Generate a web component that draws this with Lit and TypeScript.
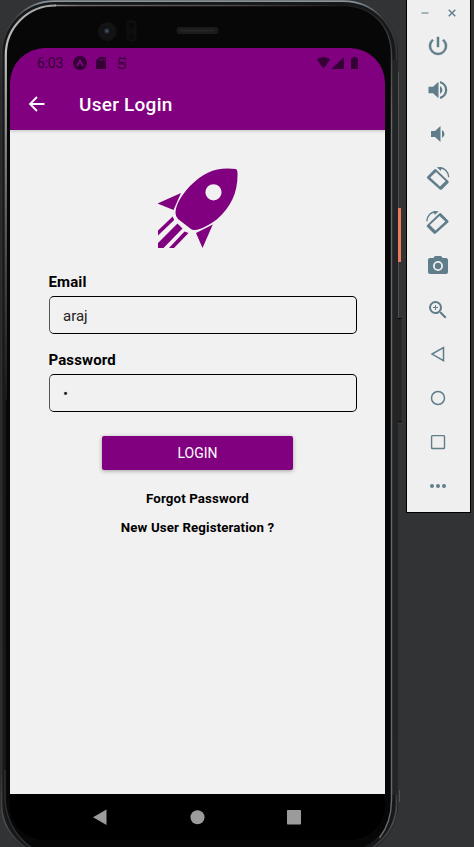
import { LitElement, html, svg, css } from "lit";
import { customElement } from "lit/decorators.js";

const rotate = svg`<path fill-rule="evenodd" d="M1.400 10.500 8.300 3.500q1-.9 2 0L22.300 15q.9 1 0 2l-6.500 6.400q-1 .8-2 0L1.400 12.500q-.9-1 0-2zM4.200 11.600 14 20.500 19.600 14.900 10 6z"/><path d="M13 2.100C18.500 1.600 22.300 5.500 22.700 11.300" fill="none" stroke="currentColor" stroke-width="1.400"/><path d="M10.800 1.300 16 .9l-1.300 4z"/>`;

const toolIcons = [
  svg`<path d="M13 3h-2v10h2V3zm4.830 2.170l-1.420 1.420A6.920 6.920 0 0 1 19 12a7 7 0 1 1-11.420-5.420L6.170 5.170A8.930 8.930 0 0 0 3 12a9 9 0 0 0 18 0c0-2.740-1.230-5.180-3.170-6.830z" stroke="currentColor" stroke-width=".5"/>`,
  svg`<path d="M2.500 8.700v6.600h4.500l5.500 5v-16.600l-5.500 5zM14 8v8a4.500 4.500 0 0 0 0-8zM14 3v2.300a7 7 0 0 1 0 13.400V21a9.200 9.200 0 0 0 0-18z"/>`,
  svg`<path d="M18.500 12A4.500 4.500 0 0 0 16 7.970v8.050A4.500 4.500 0 0 0 18.500 12zM5 9v6h4l5.500 5V4L9 9H5z"/>`,
  rotate,
  svg`<g transform="translate(23.500 0) scale(-1 1)">${rotate}</g>`,
  svg`<g><circle cx="12" cy="12" r="3.200"/><path d="M9 2 7.170 4H4c-1.100 0-2 .9-2 2v12c0 1.100.9 2 2 2h16c1.100 0 2-.9 2-2V6c0-1.100-.9-2-2-2h-3.170L15 2H9zm3 15a5 5 0 1 1 0-10 5 5 0 0 1 0 10z"/></g>`,
  svg`<path d="M15.500 14h-.79l-.28-.27A6.470 6.470 0 0 0 16 9.500 6.500 6.500 0 1 0 9.500 16c1.610 0 3.090-.59 4.230-1.570l.27.28v.79l5 4.990L20.490 19l-4.990-5zm-6 0a4.500 4.500 0 1 1 0-9 4.500 4.500 0 0 1 0 9zm2.500-4h-2v2H9v-2H7V9h2V7h1v2h2v1z"/>`,
  svg`<path d="M17.500 5.500v13.200L6 12.100z" fill="none" stroke="currentColor" stroke-width="1.500"/>`,
  svg`<circle cx="12" cy="12" r="6.500" fill="none" stroke="currentColor" stroke-width="1.500"/>`,
  svg`<rect x="5.600" y="5.600" width="12.900" height="12.900" rx=".8" fill="none" stroke="currentColor" stroke-width="1.400"/>`,
  svg`<path d="M6 10a2 2 0 1 0 0 4 2 2 0 0 0 0-4zm6 0a2 2 0 1 0 0 4 2 2 0 0 0 0-4zm6 0a2 2 0 1 0 0 4 2 2 0 0 0 0-4z"/>`,
];

@customElement("emulator-toolbar")
class EmulatorToolbar extends LitElement {
  static styles = css`
    :host { display: block; box-sizing: border-box; width: 65px; height: 513px; background: #efefef;
      border: 1px solid #000; border-top: 0; color: #607d8b; }
    .window { height: 24px; display: block; }
    .tools { display: flex; flex-direction: column; align-items: center; gap: 20px; padding: 10px 1px 0 0; }
    .tool { width: 24px; height: 24px; fill: currentColor; display: block; }
  `;
  render() {
    return html`
      <svg class="window" width="63" height="24" viewBox="0 0 63 24" fill="none" stroke="#607d8b">
        <path d="M14.500 13h7" stroke="#9aabb3" stroke-width="1.800" /><path d="M41.700 9.700l6.600 6.600m0-6.600-6.600 6.600" stroke-width="1.400" />
      </svg>
      <div class="tools">
        ${toolIcons.map((i) => html`<svg class="tool" viewBox="0 0 24 24">${i}</svg>`)}
      </div>`;
  }
}

@customElement("phone-shell")
class PhoneShell extends LitElement {
  static styles = css`:host { display: block; } svg { display: block; }`;
  render() {
    return html`<svg width="406" height="847" viewBox="0 0 406 847">
      <defs>
        <linearGradient id="rim" x1="0" x2="0" y1="0" y2="1">
          <stop offset="0" stop-color="#8b959c" /><stop offset=".006" stop-color="#6b7277" />
          <stop offset=".02" stop-color="#3a3c3e" /><stop offset=".1" stop-color="#2c2d2f" />
          <stop offset=".9" stop-color="#303234" /><stop offset=".96" stop-color="#4a4c4e" />
          <stop offset="1" stop-color="#303030" />
        </linearGradient>
        <linearGradient id="topLine" gradientUnits="userSpaceOnUse" x1="40" x2="392" y1="0" y2="0">
          <stop offset="0" stop-color="#a8a8a8" /><stop offset=".12" stop-color="#6a6a6a" />
          <stop offset=".55" stop-color="#4a4a4a" /><stop offset=".85" stop-color="#1c1c1c" />
          <stop offset="1" stop-color="#3c3d3e" />
        </linearGradient>
        <linearGradient id="leftEdge" gradientUnits="userSpaceOnUse" x1="0" x2="0" y1="5" y2="400">
          <stop offset="0" stop-color="#a8a8a8" /><stop offset=".12" stop-color="#c0c0c0" />
          <stop offset=".35" stop-color="#868686" /><stop offset=".65" stop-color="#4a4a4a" />
          <stop offset="1" stop-color="#1a1a1b" />
        </linearGradient>
        <linearGradient id="rightEdge" gradientUnits="userSpaceOnUse" x1="0" x2="0" y1="5" y2="120">
          <stop offset="0" stop-color="#1c1c1c" /><stop offset=".3" stop-color="#3c3d3f" /><stop offset="1" stop-color="#66686a" />
        </linearGradient>
        <radialGradient id="lens"><stop offset="0" stop-color="#55617a" /><stop offset=".35" stop-color="#20242d" /><stop offset=".6" stop-color="#0d0e11" /><stop offset="1" stop-color="#171717" /></radialGradient>
      </defs>
      <rect x="397" y="318" width="4.500" height="104" fill="#242424" /><path d="M397 318.500h4.500M397 421.500h4.500" stroke="#080808" />
      <path d="M398.500 72v136M398.500 262v56M399.500 790v12" stroke="#505152" />
      <rect x=".5" y=".5" width="397.500" height="857" rx="54" fill="#1c1d1f" />
      <rect x="1.500" y="1.200" width="395" height="855" rx="53" fill="#17181a" stroke="url(#rim)" stroke-width="1.800" />
      <rect x="392" y="60" width="5.500" height="735" fill="#232425" />
      <rect x="6" y="4.500" width="385.500" height="848" rx="50" fill="#070708" />
      <path d="M55 5.500H342" stroke="url(#topLine)" stroke-width="1.600" /><path d="M342 5.200C374 6 391.500 27 391.500 56V800q0 22-12 38" fill="none" stroke="url(#rightEdge)" stroke-width="1.400" />
      <path d="M5.800 400V55A49.500 49.500 0 0 1 56 5.500" fill="none" stroke="url(#leftEdge)" stroke-width="2.200" />
      <path d="M5 770v28q1 30 25 49" fill="none" stroke="#2d2e30" stroke-width="1.500" />
      <rect x="398" y="208" width="3" height="54" rx=".5" fill="#ed7961" />
      <circle cx="107.500" cy="31.500" r="9.500" fill="#121212" /><circle cx="106.800" cy="31" r="6.500" fill="url(#lens)" />
      <rect x="127" y="20.500" width="9" height="20.500" rx="4" fill="#0e0e0e" stroke="#111" />
      <circle cx="131.500" cy="25.500" r="3" fill="#090909" /><circle cx="131.500" cy="36.500" r="3" fill="#090909" />
      <rect x="176.500" y="27" width="42" height="7" rx="3" fill="#1b1b1b" /><path d="M180 30.500h34" stroke="#262626" stroke-width="2" />
    </svg>`;
  }
}

@customElement("login-screen")
class LoginScreen extends LitElement {
  static styles = css`
    :host { display: flex; flex-direction: column; width: 375px; height: 792px; border-radius: 35px; overflow: hidden;
      background: #000; font-family: Roboto, sans-serif; color: #000; }
    .top { background: #800080; height: 82px; flex: none; box-shadow: 0 1px 3px #0003; position: relative; }
    .status { height: 30px; display: flex; align-items: center; color: #350035; padding-left: 27px; box-sizing: border-box; }
    .time { font-size: 14px; line-height: 20px; width: 35px; letter-spacing: -.2px; }
    .marks { display: block; }
    .bar { display: flex; align-items: center; height: 52px; padding-left: 18px; box-sizing: border-box; }
    .back { width: 18px; height: 18px; }
    .title { margin: 1px 0 0 33px; color: #fff; font-size: 19px; line-height: 24px; font-weight: 500; letter-spacing: .25px; }
    .body { flex: 1; display: flex; flex-direction: column; padding: 37px 28px 0 38.500px; background: #f1f1f1; }
    .rocket { display: block; margin: 0 0 23px 107.500px; width: 84px; height: 82px; }
    .label { font-weight: 700; font-size: 15px; line-height: 20px; height: 20px; margin-bottom: 4px; letter-spacing: .12px; }
    .field { box-sizing: border-box; width: 308.500px; height: 38px; border: 1px solid #000; border-left-color: #555; border-radius: 5px;
      font-size: 15px; line-height: 38px; padding-left: 13.500px; color: #222; margin-bottom: 16px; }
    .login { width: 191px; height: 34px; margin: 8px 0 0 53.500px; border: 0; padding: 0; border-radius: 2px; background: #800080; color: #fff;
      font: 400 14px/34px Roboto, sans-serif; box-shadow: 0 1px 4px #0005; flex: none; }
    .link { width: 308px; margin-left: -5px; text-align: center; font-size: 13.300px; line-height: 18px; font-weight: 700; letter-spacing: .12px; }
    .forgot { margin-top: 20px; }
    .register { margin-top: 10.500px; }
    .nav { height: 46px; flex: none; background: #000; }
    .nav svg { display: block; }
  `;
  render() {
    return html`
      <div class="top">
        <div class="status">
          <span class="time">6:03</span>
          <svg class="marks" width="300" height="30" viewBox="72 48 300 30" fill="currentColor">
            <circle cx="80" cy="63" r="7" />
            <path d="M77 66 80 60.500 83 66" fill="none" stroke="#800080" stroke-width="1.900" stroke-linejoin="round" />
            <path d="M99.500 57h6.500v12H96v-8.500z" /><path d="M99.800 58.500v2.500M102 58.500v2.500M104.200 58.500v2.500" stroke="#800080" stroke-width=".9" />
            <path d="M126.500 62.500h-5.500q-2.300 0-2.300-2t2.300-2h3q1.800 0 1.800 1.500M117.800 64h5.500q2.200 0 2.200 2.200t-3.500 2.300q-3.200 0-3.700-2.200M119.500 57l1.200 1.300M125.300 57l-1.200 1.300" fill="none" stroke="currentColor" stroke-width="1.100" />
            <path d="M316.800 59.600q6.600-5 13.400 0L323.500 68.500z" /><path d="M344 57v12h-12.500z" />
            <path d="M351 58.200h1.700V57h3.600v1.200h1.700V69h-7z" />
          </svg>
        </div>
        <div class="bar">
          <svg class="back" viewBox="0 0 18 18" fill="none" stroke="#fff" stroke-width="1.800"><path d="M16.500 9H2.500M9 2 2 9l7 7" /></svg>
          <div class="title">User Login</div>
        </div>
      </div>
      <div class="body">
        <svg class="rocket" viewBox="156 167 84 82" fill="#800080">
          <path d="M236 169q1.300.5 1.500 4c.6 19-6.500 34-20.200 46-8 6-16 10.500-23 11q-2.500 0-4-1.500L178 219q-2.500-2.500-2.500-6c0-8 6-18 14.500-27 14-14.500 28-19.500 46-17zM213.500 184.200a8.100 8.100 0 1 0 0 16.200 8.100 8.100 0 0 0 0-16.200z" fill-rule="evenodd" />
          <path d="M181 193l-7.500 17-16-6.500zM212.800 224.500l-10.300 23.500-6.500-15z" />
          <path d="M172.700 216.500l1.500 3.500L158 235.500v-5zM177.500 223.500l5 5-19 19.500h-5.500v-5zM184.500 231.500l4 1.500-14.500 15H169z" />
        </svg>
        <div class="label">Email</div>
        <div class="field">araj</div>
        <div class="label">Password</div>
        <div class="field">•</div>
        <button class="login">LOGIN</button>
        <div class="link forgot">Forgot Password</div>
        <div class="link register">New User Registeration ?</div>
      </div>
      <div class="nav">
        <svg width="375" height="46" viewBox="10 794 375 46" fill="#9b9b9b">
          <path d="M106.500 809.500v15.500L93 817.200z" /><circle cx="197.500" cy="817.200" r="7" /><rect x="287" y="810" width="14" height="14.500" rx=".8" />
        </svg>
      </div>`;
  }
}

@customElement("app-root")
class AppRoot extends LitElement {
  static styles = css`
    :host { display: grid; grid-template-columns: 406px 65px 3px; width: 474px; height: 847px; overflow: hidden; background: #323335; }
    .phone { display: grid; height: 847px; }
    .phone > * { grid-area: 1 / 1; }
    .screen { margin: 48px 0 0 10px; }
    .edge { height: 513px; background: #35322f; }
  `;
  render() {
    return html`
      <div class="phone"><phone-shell></phone-shell><login-screen class="screen"></login-screen></div>
      <emulator-toolbar></emulator-toolbar>
      <div class="edge"></div>`;
  }
}
